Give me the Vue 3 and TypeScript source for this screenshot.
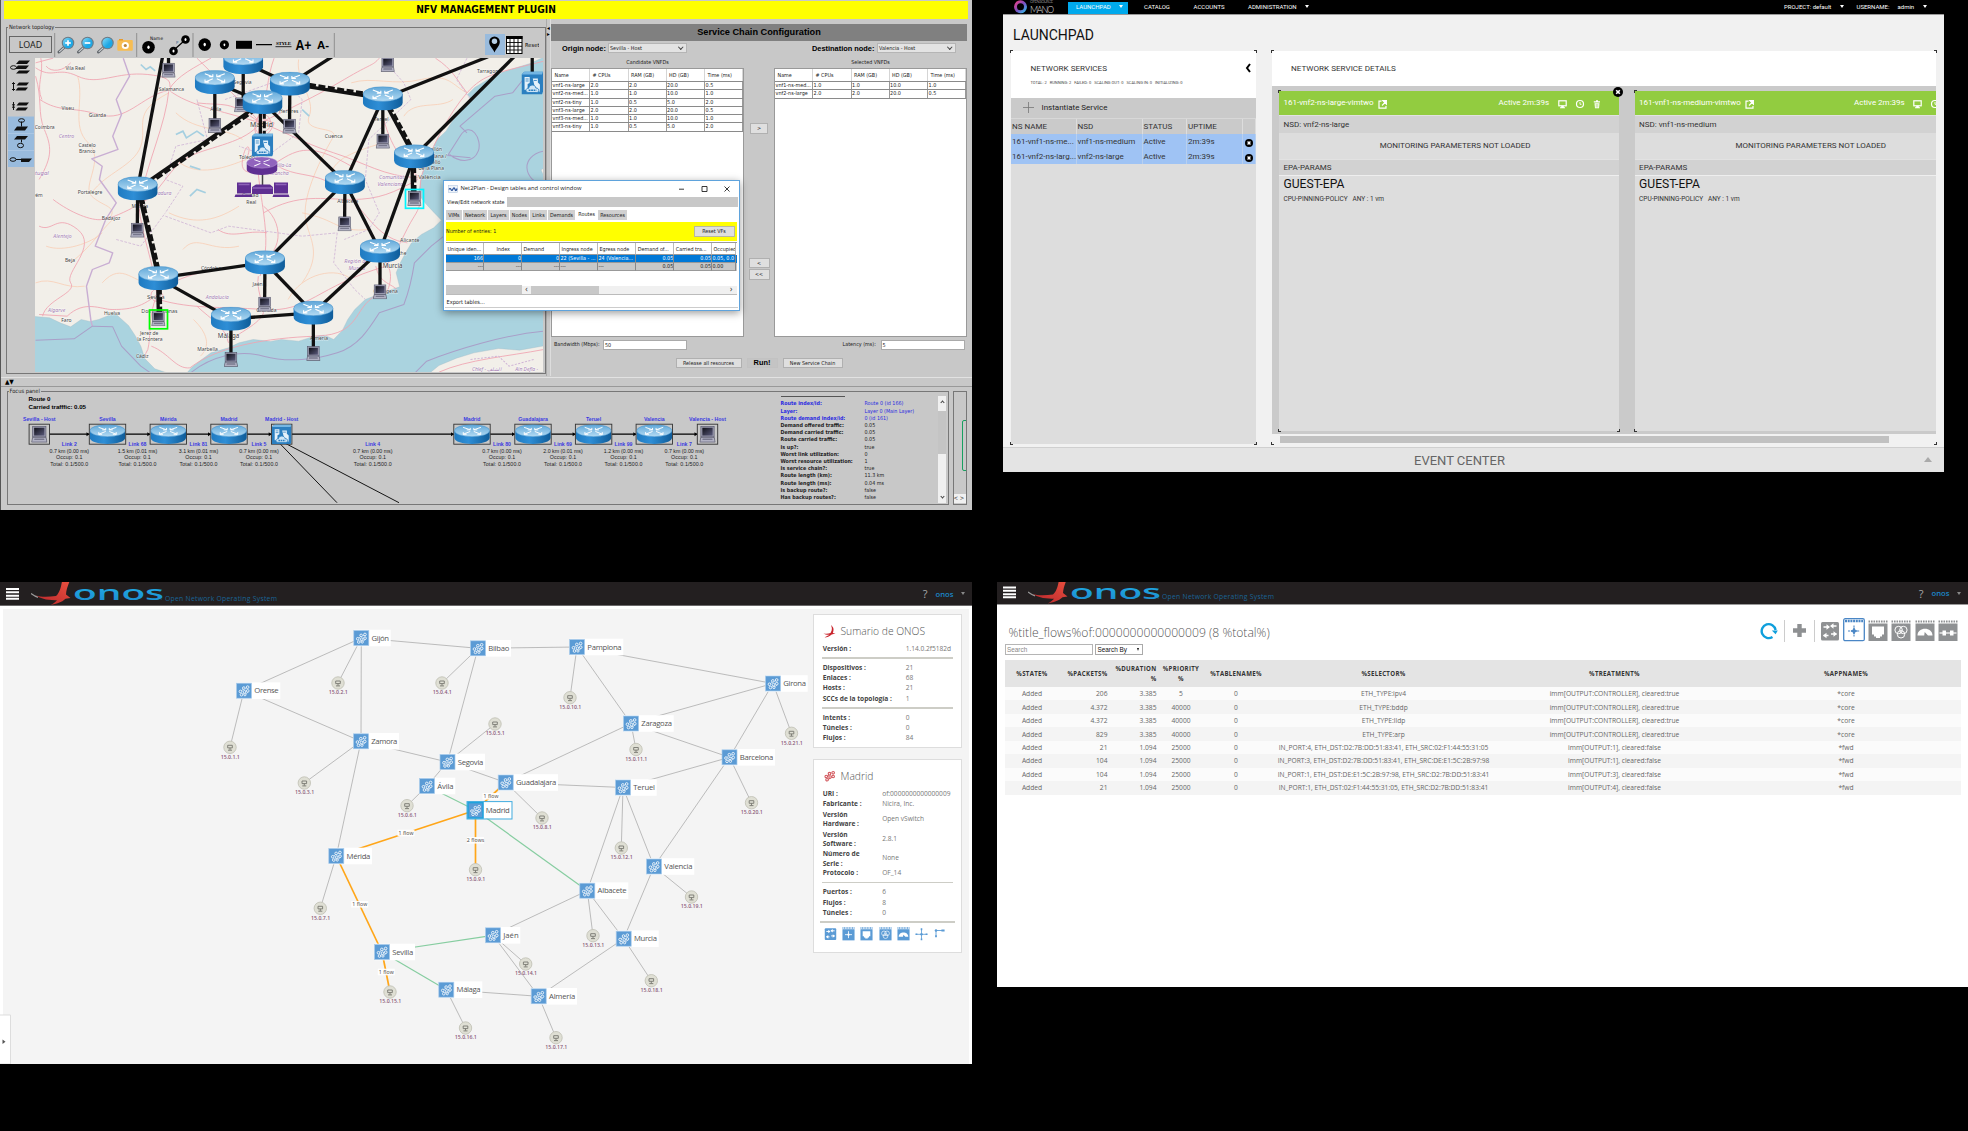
<script setup lang="ts">
type P = [number, number]

/* ---------- NFV window: geographic map ---------- */
const KX = 0.35075
const KY = 1 / 3
const mx = (x: number) => x * KX
const my = (y: number) => y * KY

const routers: P[] = [[692, 188], [611, 248], [825, 253], [747, 308], [1090, 297], [1179, 471], [391, 567], [982, 548], [754, 789], [1082, 754], [450, 836], [657, 958], [892, 940]]
const laptops: P[] = [[479, 212], [611, 378], [686, 316], [824, 380], [1090, 425], [1104, 195], [390, 692], [981, 673], [1180, 597], [450, 958], [753, 914], [1082, 877], [657, 1080], [892, 1062]]
const mapLinks: [number, number, number, number][] = [
  [692, 188, 825, 253], [692, 188, 692, 300], [611, 248, 611, 378], [611, 248, 747, 308], [825, 253, 747, 308],
  [825, 253, 945, 172], [1090, 297, 1390, 172], [1090, 297, 1090, 425], [1090, 297, 982, 548], [1179, 471, 1464, 172],
  [1179, 471, 1082, 754], [391, 567, 462, 172], [747, 308, 982, 548], [825, 253, 824, 380], [391, 567, 390, 692],
  [450, 836, 754, 789], [450, 836, 657, 958], [657, 958, 892, 940], [892, 940, 754, 789], [754, 789, 982, 548],
  [754, 789, 753, 914], [982, 548, 981, 673], [982, 548, 1082, 754], [1082, 754, 892, 940], [1082, 754, 1082, 877],
  [657, 958, 657, 1080], [892, 940, 892, 1062], [1516, 172, 1516, 250], [479, 172, 479, 212],
]
const routeLinks: [number, number, number, number][] = [
  [825, 253, 1090, 297], [1090, 297, 1179, 471], [1173, 471, 1175, 590], [747, 308, 391, 567], [741, 308, 741, 430], [391, 567, 450, 836], [448, 836, 450, 950],
]
const parallel = routeLinks.map(([a, b, c, d], i) => {
  const x1 = mx(a), y1 = my(b), x2 = mx(c), y2 = my(d)
  const l = Math.hypot(x2 - x1, y2 - y1)
  const gap = i === 4 ? 3.9 : 2.5
  const ox = Math.abs(((y2 - y1) / l) * gap), oy = -((x2 - x1) / l) * gap * Math.sign(y2 - y1)
  return { x1: x1 + ox, y1: y1 + oy, x2: x2 + ox, y2: y2 + oy }
})
const places: [string, number, number, number, string][] = [
  ['Vila Real', 213, 212, 5, ''], ['Salamanca', 487, 274, 5, ''], ['Viseu', 192, 331, 5, ''], ['Guarda', 276, 354, 5, ''], ['Coimbra', 126, 390, 5, ''],
  ['Centro', 188, 416, 5.2, 'r'], ['Castelo', 247, 442, 5, ''], ['Branco', 247, 461, 5, ''], ['Portugal', 105, 527, 6, 'r'], ['Portalegre', 255, 584, 5, ''],
  ['Santarém', 88, 593, 5, ''], ['Extremadura', 445, 588, 5.2, 'r'], ['Mérida', 397, 627, 5, ''], ['Badajoz', 315, 661, 5, ''], ['Alentejo', 177, 716, 5.2, 'r'], ['Beja', 198, 789, 5, ''],
  ['Algarve', 160, 938, 5.2, 'r'], ['Faro', 188, 967, 5, ''], ['Huelva', 318, 948, 5, ''], ['Sevilla', 443, 898, 6, ''], ['Dos Hermanas', 453, 942, 5.2, ''],
  ['Jerez de', 424, 1007, 5, ''], ['la Frontera', 426, 1026, 5, ''], ['Cádiz', 404, 1076, 5, ''], ['Marbella', 590, 1056, 5, ''], ['Málaga', 650, 1017, 6.2, ''],
  ['Andalucía', 618, 899, 5.2, 'r'], ['Córdoba', 600, 812, 5, ''], ['Jaén', 733, 859, 5, ''], ['Granada', 758, 937, 5, ''], ['Almería', 908, 1022, 5, ''],
  ['Segovia', 690, 253, 5, ''], ['Ávila', 614, 334, 5, ''], ['Alcalá de Henares', 790, 340, 5, ''], ['Madrid', 744, 383, 6.8, ''], ['Toledo', 703, 480, 5.2, ''],
  ['Castilla-La', 795, 504, 5.2, 'r'], ['Mancha', 795, 527, 5.2, 'r'], ['Ciudad', 712, 594, 5, ''], ['Real', 715, 614, 5, ''], ['Cuenca', 950, 416, 5.2, ''],
  ['Teruel', 1086, 365, 5, ''], ['Tarragona', 1393, 221, 5, ''], ['Castellón', 1228, 456, 5, ''], ['de la Plana /', 1232, 475, 5, ''], ['Castelló', 1228, 494, 5, ''], ['de la Plana', 1228, 513, 5, ''],
  ['València', 1223, 540, 5.8, ''], ['Comunitat', 1115, 539, 5.4, 'r'], ['Valenciana', 1112, 560, 5.4, 'r'], ['Albacete', 990, 612, 5.2, ''], ['Alicante', 1167, 728, 5.2, ''],
  ['Elche', 1140, 768, 5, ''], ['Región de', 1014, 791, 5.4, 'r'], ['Murcia', 1016, 813, 5.4, 'r'], ['Murcia', 1118, 805, 6.2, ''], ['Cartagena', 1098, 882, 5, ''],
  ['Chlef - الشلف', 1386, 1116, 5, 'r'], ['Aïn Defla -', 1500, 1116, 5, 'r'],
]
const roads = [
  'M100 205C150 240 160 200 220 230S330 215 420 225S470 260 490 270',
  'M100 230C120 300 105 340 125 390S150 470 110 540', 'M112 300C170 340 200 320 280 345S400 290 480 272',
  'M480 272C500 230 560 200 600 176', 'M480 272C540 320 620 330 740 370', 'M740 370C760 300 760 230 780 176',
  'M740 370C700 320 650 270 560 176', 'M740 370C820 330 900 290 980 240S1060 200 1080 176', 'M740 370C800 390 860 430 950 460S1090 530 1190 535',
  'M740 370C720 460 740 560 750 640S760 760 740 830', 'M740 370C700 430 600 440 540 470S460 580 395 615', 'M395 615C350 640 320 655 290 660S200 640 150 600',
  'M395 620C400 700 440 800 445 880', 'M445 880C520 820 600 810 700 800S820 680 750 620', 'M445 885C400 930 350 930 318 930S240 900 190 950L110 945',
  'M445 890C420 950 430 1010 420 1050L410 1070', 'M430 1040C480 1060 500 1110 540 1105', 'M450 900C550 930 620 920 750 930S900 860 1100 800',
  'M540 1105C620 1040 760 1015 900 1010S1000 910 1090 880', 'M1100 800C1140 740 1150 700 1180 650S1190 590 1200 530', 'M1200 530C1230 440 1280 340 1330 280S1420 220 1549 185',
  'M1000 600C1050 650 1080 720 1160 730', 'M750 640C850 580 920 600 1000 600S1120 580 1190 540', 'M750 360C760 330 720 350 725 390S770 410 780 370Z', 'M735 350C740 340 760 340 768 360S760 400 740 400S728 370 735 350Z',
  'M650 1030C640 980 600 960 560 920', 'M735 830C730 870 745 900 750 930S700 990 655 1020', 'M480 272C470 380 420 480 395 615', 'M1330 280C1300 240 1290 210 1240 176', 'M110 680C150 700 160 640 220 690S180 820 200 850S130 900 120 950', 'M1090 300C1080 370 1130 480 1190 530', 'M1250 1118C1330 1080 1450 1070 1549 1050',
  'M1070 800C1080 850 1110 850 1130 870M1060 770C1120 780 1120 840 1100 880', 'M100 190L150 176M115 176C125 220 100 260 118 300M130 200C145 220 180 215 200 190', 'M740 370C650 300 640 320 560 310', 'M790 500C840 530 880 520 930 545M620 690C660 720 700 690 760 700',
  'M700 480C720 440 700 420 690 480S740 520 800 480S900 440 1000 500', 'M440 870C420 880 430 910 450 905S470 880 440 870',
]
const minorRoads = [
  'M220 230C240 300 200 380 250 430S230 560 260 590S330 620 315 650', 'M260 580C300 520 380 500 400 440S370 340 480 280', 'M500 480C560 540 650 500 700 480', 'M850 180C840 240 900 300 880 350S960 380 950 410',
  'M950 410C900 500 860 600 870 660S920 760 860 850', 'M480 640C560 680 620 660 680 620', 'M200 790C260 740 280 700 320 660', 'M860 640C960 660 960 700 1050 690', 'M1000 250C1060 230 1120 260 1200 240S1290 260 1330 280', 'M520 750C560 700 600 760 680 740', 'M290 850C350 780 380 860 440 850', 'M820 900C860 820 960 800 1000 840',
  'M500 340C560 400 640 380 690 420', 'M940 560C930 480 1000 460 1090 430', 'M1150 350C1180 300 1250 330 1290 300', 'M550 960C590 1000 600 1040 570 1070', 'M130 740C180 760 260 730 290 700M100 850C150 830 180 870 240 860',
]
const regionLines = ['M560 300L590 420L500 440L470 540L520 560L470 640', 'M640 300L800 240L860 300L850 400L760 470L680 440', 'M1090 180L1150 250L1170 300L1050 420L1040 540L1080 640L1050 690L980 720', 'M470 650L600 700L650 680L860 710L960 700', 'M960 700L950 790L1010 870L1040 900', 'M1330 176L1300 240L1340 300', 'M330 720L400 740L470 640']

interface Row { n: string; c: string; r: string; h: string; t: string }
const mk = (n: string, c: string, r: string, h: string, t: string): Row => ({ n, c, r, h, t })
const candidates: Row[] = [
  mk('vnf1-ns-large', '2.0', '2.0', '20.0', '0.5'), mk('vnf2-ns-med...', '1.0', '1.0', '10.0', '1.0'), mk('vnf2-ns-tiny', '1.0', '0.5', '5.0', '2.0'),
  mk('vnf3-ns-large', '2.0', '2.0', '20.0', '0.5'), mk('vnf3-ns-med...', '1.0', '1.0', '10.0', '1.0'), mk('vnf3-ns-tiny', '1.0', '0.5', '5.0', '2.0'),
]
const selected: Row[] = [mk('vnf1-ns-med...', '1.0', '1.0', '10.0', '1.0'), mk('vnf2-ns-large', '2.0', '2.0', '20.0', '0.5')]

const tabs = ['VIMs', 'Network', 'Layers', 'Nodes', 'Links', 'Demands', 'Routes', 'Resources']

/* ---------- focus panel ---------- */
const focusNodes: { t: string; x: number; k: 'laptop' | 'router' | 'server' }[] = [
  { t: 'Sevilla - Host', x: 39.3, k: 'laptop' }, { t: 'Sevilla', x: 107.5, k: 'router' }, { t: 'Mérida', x: 168.3, k: 'router' }, { t: 'Madrid', x: 229, k: 'router' },
  { t: 'Madrid - Host', x: 281.7, k: 'server' }, { t: 'Madrid', x: 472, k: 'router' }, { t: 'Guadalajara', x: 533, k: 'router' }, { t: 'Teruel', x: 593.6, k: 'router' },
  { t: 'Valencia', x: 654.3, k: 'router' }, { t: 'Valencia - Host', x: 707.5, k: 'laptop' },
]
const half = (k: string) => (k === 'router' ? 18 : 10)
const focusLinks = [
  { t: 'Link 2', d: '0.7 km (0.00 ms)', x: 69.3 }, { t: 'Link 68', d: '1.5 km (0.01 ms)', x: 137.5 }, { t: 'Link 81', d: '3.1 km (0.01 ms)', x: 198.5 }, { t: 'Link 5', d: '0.7 km (0.00 ms)', x: 259 },
  { t: 'Link 4', d: '0.7 km (0.00 ms)', x: 372.7 }, { t: 'Link 80', d: '0.7 km (0.00 ms)', x: 502 }, { t: 'Link 69', d: '2.0 km (0.01 ms)', x: 563 }, { t: 'Link 99', d: '1.2 km (0.00 ms)', x: 623.5 }, { t: 'Link 7', d: '0.7 km (0.00 ms)', x: 684.3 },
]
const routeInfo: [string, string][] = [
  ['Route index/id:', 'Route 0 (id 166)'], ['Layer:', 'Layer 0 (Main Layer)'], ['Route demand index/id:', '0 (id 161)'], ['Demand offered traffic:', '0.05'], ['Demand carried traffic:', '0.05'],
  ['Route carried traffic:', '0.05'], ['Is up?:', 'true'], ['Worst link utilization:', '0'], ['Worst resource utilization:', '1'], ['Is service chain?:', 'true'],
  ['Route length (km):', '11.3 km'], ['Route length (ms):', '0.04 ms'], ['Is backup route?:', 'false'], ['Has backup routes?:', 'false'],
]

/* ---------- launchpad ---------- */
const services = [
  { name: '161-vnf1-ns-me...', nsd: 'vnf1-ns-medium' },
  { name: '161-vnf2-ns-larg...', nsd: 'vnf2-ns-large' },
]
const cards = [
  { name: '161-vnf2-ns-large-vimtwo', nsd: 'vnf2-ns-large' },
  { name: '161-vnf1-ns-medium-vimtwo', nsd: 'vnf1-ns-medium' },
]

/* ---------- ONOS topology ---------- */
interface City { n: string; x: number; y: number; e: number }
const cities: Record<string, City> = {
  gi: { n: 'Gijón', x: 361.3, y: 638, e: 390.7 }, or: { n: 'Orense', x: 244, y: 690.7, e: 280.3 }, za: { n: 'Zamora', x: 361, y: 741.3, e: 399 },
  se: { n: 'Segovia', x: 447.5, y: 762, e: 485 }, av: { n: 'Ávila', x: 427, y: 786, e: 455.3 }, me: { n: 'Mérida', x: 336.3, y: 856, e: 372 },
  sv: { n: 'Sevilla', x: 382, y: 952, e: 415 }, ma: { n: 'Málaga', x: 446.3, y: 989.7, e: 482.3 }, ja: { n: 'Jaén', x: 493, y: 935.3, e: 520.3 },
  bi: { n: 'Bilbao', x: 478, y: 648.3, e: 511 }, pa: { n: 'Pamplona', x: 577, y: 647, e: 623.3 }, gr: { n: 'Girona', x: 773, y: 683.5, e: 807.7 },
  zr: { n: 'Zaragoza', x: 631, y: 723.5, e: 673.7 }, ba: { n: 'Barcelona', x: 729.5, y: 757.3, e: 775 }, gu: { n: 'Guadalajara', x: 505.7, y: 782.5, e: 558 },
  te: { n: 'Teruel', x: 623, y: 787.5, e: 656.7 }, va: { n: 'Valencia', x: 654, y: 866.5, e: 694.3 }, al: { n: 'Albacete', x: 587.3, y: 890.7, e: 628.3 },
  mu: { n: 'Murcia', x: 623.7, y: 938.7, e: 658.7 }, am: { n: 'Almería', x: 538.7, y: 996.3, e: 577 }, mdr: { n: 'Madrid', x: 475.5, y: 810.3, e: 511.5 },
}
const edges: [string, string, string][] = [
  ['gi', 'or', 'g'], ['gi', 'bi', 'g'], ['gi', 'za', 'g'], ['or', 'za', 'g'], ['za', 'se', 'g'], ['za', 'me', 'g'], ['bi', 'se', 'g'], ['bi', 'pa', 'g'], ['pa', 'gr', 'g'], ['pa', 'zr', 'g'],
  ['gr', 'zr', 'g'], ['gr', 'ba', 'g'], ['zr', 'ba', 'g'], ['zr', 'gu', 'g'], ['se', 'gu', 'g'], ['se', 'av', 'g'], ['gu', 'te', 'g'], ['te', 'ba', 'g'], ['te', 'al', 'g'], ['te', 'va', 'g'],
  ['ba', 'va', 'g'], ['va', 'mu', 'g'], ['al', 'mu', 'g'], ['al', 'ja', 'g'], ['ja', 'am', 'g'], ['mu', 'am', 'g'], ['ma', 'am', 'g'],
  ['av', 'mdr', 'n'], ['mdr', 'al', 'n'], ['sv', 'ja', 'n'], ['sv', 'ma', 'n'],
  ['mdr', 'me', 'o'], ['me', 'sv', 'o'], ['mdr', 'gu', 'o'],
]
const hosts: [string, number, number, string][] = [
  ['15.0.2.1', 338, 683, 'gi'], ['15.0.4.1', 442, 683, 'bi'], ['15.0.1.1', 230, 747.3, 'or'], ['15.0.3.1', 304.3, 783, 'za'], ['15.0.5.1', 495, 724, 'se'], ['15.0.6.1', 407, 805.7, 'av'],
  ['15.0.9.1', 475.5, 869.7, 'mdr'], ['15.0.7.1', 320.3, 908.3, 'me'], ['15.0.15.1', 390, 992, 'sv'], ['15.0.16.1', 465.5, 1028, 'ma'], ['15.0.17.1', 556, 1037.7, 'am'], ['15.0.14.1', 525.7, 964, 'ja'],
  ['15.0.13.1', 593, 935.7, 'al'], ['15.0.18.1', 651.3, 980.7, 'mu'], ['15.0.19.1', 691.5, 897, 'va'], ['15.0.12.1', 621.3, 848, 'te'], ['15.0.8.1', 542, 818, 'gu'], ['15.0.20.1', 751.5, 802.7, 'ba'],
  ['15.0.21.1', 791.5, 733.3, 'gr'], ['15.0.11.1', 636, 749.5, 'zr'], ['15.0.10.1', 570, 697.7, 'pa'],
]
const flowTags: [string, number, number][] = [['1 flow', 406, 832.7], ['1 flow', 491, 796], ['2 flows', 475.5, 840], ['1 flow', 359.7, 904], ['1 flow', 386.3, 971.7]]

const flowRows = [
  ['206', '3.385', '5', 'ETH_TYPE:ipv4', 'imm[OUTPUT:CONTROLLER], cleared:true', '*core'],
  ['4.372', '3.385', '40000', 'ETH_TYPE:bddp', 'imm[OUTPUT:CONTROLLER], cleared:true', '*core'],
  ['4.372', '3.385', '40000', 'ETH_TYPE:lldp', 'imm[OUTPUT:CONTROLLER], cleared:true', '*core'],
  ['829', '3.385', '40000', 'ETH_TYPE:arp', 'imm[OUTPUT:CONTROLLER], cleared:true', '*core'],
  ['21', '1.094', '25000', 'IN_PORT:4, ETH_DST:D2:7B:DD:51:83:41, ETH_SRC:02:F1:44:55:31:05', 'imm[OUTPUT:1], cleared:false', '*fwd'],
  ['104', '1.094', '25000', 'IN_PORT:3, ETH_DST:D2:7B:DD:51:83:41, ETH_SRC:DE:E1:5C:2B:97:98', 'imm[OUTPUT:1], cleared:false', '*fwd'],
  ['104', '1.094', '25000', 'IN_PORT:1, ETH_DST:DE:E1:5C:2B:97:98, ETH_SRC:D2:7B:DD:51:83:41', 'imm[OUTPUT:3], cleared:false', '*fwd'],
  ['21', '1.094', '25000', 'IN_PORT:1, ETH_DST:02:F1:44:55:31:05, ETH_SRC:D2:7B:DD:51:83:41', 'imm[OUTPUT:4], cleared:false', '*fwd'],
]
const viewIcons = ['dev', 'flow', 'port', 'group', 'meter', 'pipe']
const detailIcons = ['dev', 'flow', 'port', 'group', 'meter', 'cross', 'corner']
</script>

<template>
  <svg class="defs" width="0" height="0">
    <defs>
      <linearGradient id="gTop" x1="0" y1="0" x2="0" y2="1"><stop offset="0" stop-color="#5ea6d8" /><stop offset="1" stop-color="#b4dbf3" /></linearGradient>
      <linearGradient id="gBody" x1="0" y1="0" x2="1" y2="0"><stop offset="0" stop-color="#1f7ac0" /><stop offset=".4" stop-color="#2e8ed6" /><stop offset="1" stop-color="#0f5c99" /></linearGradient>
      <linearGradient id="gLap" x1="0" y1="0" x2="1" y2="1"><stop offset="0" stop-color="#101018" /><stop offset="1" stop-color="#59597a" /></linearGradient>
      <linearGradient id="gZoom" x1="0" y1="0" x2="1" y2="1"><stop offset="0" stop-color="#8fe0fb" /><stop offset=".6" stop-color="#1ea7e4" /></linearGradient>
      <linearGradient id="gOnos" x1="0" y1="0" x2="0" y2="1"><stop offset="0" stop-color="#22b5ea" /><stop offset="1" stop-color="#1b86cc" /></linearGradient>
      <linearGradient id="gBird" x1="0" y1="1" x2="1" y2="0"><stop offset="0" stop-color="#b8252b" /><stop offset="1" stop-color="#e9503f" /></linearGradient>
      <linearGradient id="gRing" x1="0" y1="0" x2="1" y2="1"><stop offset="0" stop-color="#e8408a" /><stop offset=".5" stop-color="#7a4fc0" /><stop offset="1" stop-color="#35b7ea" /></linearGradient>
    </defs>
    <symbol id="router" viewBox="0 0 40 24" preserveAspectRatio="none">
      <path d="M0 7.5v8.500C0 26.500 40 26.500 40 16V7.500z" fill="url(#gBody)" />
      <ellipse cx="20" cy="7.500" rx="19.800" ry="7.400" fill="url(#gTop)" stroke="#3b8cc9" stroke-width=".5" />
      <path d="M18 6.500L10 3.500M22 6.500L30 3.500M18 8.500L10 12M22 8.500L30 12M14 6.600h4V4.200M26 6.600h-4V4.200M10.200 9.300V12H14M29.800 9.300V12H26" fill="none" stroke="#fff" stroke-width="1.100" />
    </symbol>
    <symbol id="prouter" viewBox="0 0 40 24" preserveAspectRatio="none">
      <path d="M0 7.5v8.500C0 26.500 40 26.500 40 16V7.500z" fill="#5f2f92" />
      <ellipse cx="20" cy="7.500" rx="19.800" ry="7.400" fill="#9163bd" stroke="#c9b0de" stroke-width=".5" />
      <path d="M18 6.500L10 3.500M22 6.500L30 3.500M18 8.500L10 12M22 8.500L30 12" fill="none" stroke="#fff" stroke-width="1.300" />
    </symbol>
    <symbol id="laptop" viewBox="0 0 14 15" preserveAspectRatio="none">
      <rect x="1.200" y=".5" width="11.600" height="9.500" fill="#9c9cb0" stroke="#55556a" stroke-width=".6" />
      <rect x="2.500" y="1.800" width="9" height="6.900" fill="url(#gLap)" />
      <path d="M1.200 10.200h11.600l1 4.300H.2z" fill="#b2b2c4" stroke="#4a4a5c" stroke-width=".6" />
      <path d="M2.800 11.300h8.400l.3 1.400h-9z" fill="#77778c" />
    </symbol>
    <symbol id="server" viewBox="0 0 21 23" preserveAspectRatio="none">
      <path d="M0 3L3 0h18v20l-1 3H0z" fill="#2b7fc0" />
      <path d="M0 3L3 0h18l-1 3z" fill="#74b6e3" />
      <path d="M3 5.500h5v6l-2 1v6H3zM11 7h5v4l2 2v7h-4z" fill="#e4f1fa" />
      <path d="M4 7.500h3M4 9.500h3M12 9h3" stroke="#2b7fc0" stroke-width=".8" />
      <path d="M6.500 21c-3.500-.5-2.500-4.500.5-4.300.7-4.200 6.500-4.200 7-.2 3.500 0 4 4 1 4.500z" fill="#cfe6f6" stroke="#2b7fc0" stroke-width=".9" />
      <path d="M7 18.800h7.500" stroke="#2b7fc0" stroke-width="1.600" stroke-dasharray="1.800 .6" />
    </symbol>
    <symbol id="switch" viewBox="0 0 16 16">
      <path d="M3.800 9.500l5-4.500M5.500 12.500l5.500-5M9 12l3.500-2.500M9.500 6L12 4" stroke="#fff" stroke-width=".7" fill="none" />
      <g fill="#5b9bd5" stroke="#fff" stroke-width=".85"><circle cx="4.200" cy="8.800" r="1.400" /><circle cx="7.800" cy="5.200" r="1.400" /><circle cx="11.900" cy="4.200" r="1.400" /><circle cx="5.300" cy="12.300" r="1.400" /><circle cx="8.500" cy="9.200" r="1.400" /><circle cx="12" cy="8.200" r="1.400" /><circle cx="9" cy="12.300" r="1.200" /></g>
    </symbol>
    <symbol id="bird" viewBox="0 0 40 24">
      <path d="M31 0h7.500c-2 5-3.300 9-3.500 13l4.500 3.500-5 .7c-4 3.800-9 5-15 6.300 3-1.500 5-3 6.500-4.800C16 19 9 17 4.500 13.800 10 16 18 15.500 25 14.500 29 11 30 5 31 0z" fill="url(#gBird)" />
      <path d="M0 12c2 1.500 4 3 7 3.800" stroke="#999" stroke-width="1.200" fill="none" />
    </symbol>
    <symbol id="dev" viewBox="0 0 20 22"><rect x="1" y="2" width="18" height="18.500" rx="1.500" fill="currentColor" /><path d="M3.500 7h5M11 6h5.500M3.500 15.500h5M11 14h5.500" stroke="#fff" stroke-width="1.500" fill="none" /><path d="M6.500 4.200L10 7 6.500 9.800zM13.500 3.200L10 6l3.500 2.800zM6.500 12.700L3 15.500l3.500 2.800zM13.500 11.200l3.500 2.800-3.500 2.800z" fill="#fff" /></symbol>
    <symbol id="flow" viewBox="0 0 20 22"><path d="M.5 1.500h19" stroke="currentColor" stroke-width="2.200" stroke-dasharray="1.600 .9" /><rect x=".5" y="3.500" width="19" height="17.500" fill="currentColor" /><path d="M10 6.500v11M4.500 12h11" stroke="#fff" stroke-width="1.300" /><circle cx="10" cy="12" r="1.800" fill="#fff" /></symbol>
    <symbol id="flowOn" viewBox="0 0 22 24"><rect x=".7" y=".7" width="20.600" height="22" rx="1.500" fill="#fff" stroke="#4a86c5" stroke-width="1.300" /><path d="M2 3h18" stroke="#4a86c5" stroke-width="2.600" stroke-dasharray="2 .7" /><path d="M11 7.500v11M5 13h12" stroke="#4a86c5" stroke-width="1.100" stroke-dasharray="2.200 .8" /><path d="M11 10v6M8 13h6" stroke="#4a86c5" stroke-width="1.500" /><circle cx="11" cy="13" r="1.900" fill="#4a86c5" /></symbol>
    <symbol id="port" viewBox="0 0 20 22"><path d="M.5 1.500h19" stroke="currentColor" stroke-width="2.200" stroke-dasharray="1.600 .9" /><rect x=".5" y="3.500" width="19" height="17.500" fill="currentColor" /><path d="M4 6.500h12v8h-2v2h-2v1.500H8v-1.500H6v-2H4z" fill="#fff" /></symbol>
    <symbol id="group" viewBox="0 0 20 22"><path d="M.5 1.500h19" stroke="currentColor" stroke-width="2.200" stroke-dasharray="1.600 .9" /><rect x=".5" y="3.500" width="19" height="17.500" fill="currentColor" /><g fill="none" stroke="#fff" stroke-width="1"><circle cx="7.600" cy="10" r="3.700" /><circle cx="12.400" cy="10" r="3.700" /><circle cx="10" cy="14.300" r="3.700" /></g></symbol>
    <symbol id="meter" viewBox="0 0 20 22"><path d="M.5 1.500h19" stroke="currentColor" stroke-width="2.200" stroke-dasharray="1.600 .9" /><rect x=".5" y="3.500" width="19" height="17.500" fill="currentColor" /><path d="M2.500 15.500c0-9 15-9 15 0h-4.500l-3.300-3.500-.5 3.500z" fill="#fff" /></symbol>
    <symbol id="pipe" viewBox="0 0 20 22"><path d="M.5 1.500h19" stroke="currentColor" stroke-width="2.200" stroke-dasharray="1.600 .9" /><rect x=".5" y="3.500" width="19" height="17.500" fill="currentColor" /><path d="M1.500 13h17" stroke="#fff" stroke-width="1.200" /><path d="M4.500 10.500h3.500v5H4.500zM12 10.500h3.500v5H12z" fill="#fff" /></symbol>
    <symbol id="cross" viewBox="0 0 20 22"><path d="M10 3v17M1.500 11.500h17" stroke="currentColor" stroke-width="1.300" /><circle cx="10" cy="11.500" r="2" fill="currentColor" /><path d="M10 2v3M10 18v3M.5 11.500h3M16.500 11.500h3" stroke="currentColor" stroke-width="2.500" /></symbol>
    <symbol id="corner" viewBox="0 0 20 22"><path d="M4.500 14V5.500H14" fill="none" stroke="currentColor" stroke-width="1.400" /><circle cx="4.500" cy="5.500" r="2" fill="currentColor" /><path d="M4.500 13v3M13 5.500h5" stroke="currentColor" stroke-width="2.800" /></symbol>
    <symbol id="closeDot" viewBox="0 0 10 10"><circle cx="5" cy="5" r="5" fill="#000" /><path d="M3.200 3.200l3.600 3.600M6.800 3.200L3.200 6.800" stroke="#fff" stroke-width="1.600" /></symbol>
  </svg>

  <main class="desk">
    <!-- NFV management plugin -->
    <section class="win nfv">
      <h1 class="banner">NFV MANAGEMENT PLUGIN</h1>
      <div class="upper">
        <div class="topo">
          <span class="legend">Network topology</span>
          <div class="tools">
            <span class="load">LOAD</span>
            <svg class="toolsvg" width="486" height="26" viewBox="54 33 486 26">
              <path d="M55.700 33v24M137.700 33v24M194 33v24M335.300 33v24" stroke="#8f8f8f" stroke-width="1" />
              <g v-for="(x, i) in [69, 88.5, 108.5]" :key="x">
                <path :d="`M${x - 4} 47.500l-5 4.500`" stroke="#5e6368" stroke-width="3" stroke-linecap="round" />
                <path :d="`M${x - 4.500} 48l-4 3.600`" stroke="#c9ccd0" stroke-width="1.200" stroke-linecap="round" />
                <circle :cx="x" cy="43" r="5.700" fill="url(#gZoom)" stroke="#6d7a85" stroke-width="1.100" />
                <path v-if="i < 2" :d="`M${x - 2.800} 43h5.600`" stroke="#fff" stroke-width="1.700" />
                <path v-if="i === 0" :d="`M${x} 40.200v5.600`" stroke="#fff" stroke-width="1.700" />
              </g>
              <rect x="118.300" y="40" width="15.500" height="10.800" rx="1" fill="#f7bd52" /><path d="M120 39h4v1.500h-4z" fill="#e79a2b" /><circle cx="126.300" cy="45.500" r="3.600" fill="#fff" /><circle cx="126.300" cy="45.500" r="1.600" fill="#b9863a" />
              <g fill="#000"><circle cx="149.500" cy="47.300" r="6.300" /><circle cx="174.500" cy="51" r="4.300" /><circle cx="186.500" cy="39.500" r="4.300" /><circle cx="205.700" cy="44.600" r="6.300" /><circle cx="225.400" cy="44.800" r="4.600" /></g>
              <path d="M176 49l9-8M257 44.700h16" stroke="#000" stroke-width="1.200" />
              <g fill="#fff"><ellipse cx="149.500" cy="47.300" rx="1.200" ry="1.800" /><ellipse cx="174.500" cy="51" rx="1" ry="1.500" /><ellipse cx="186.500" cy="39.500" rx="1" ry="1.500" /><ellipse cx="205.700" cy="44.600" rx="1.200" ry="1.800" /><ellipse cx="225.400" cy="44.800" rx=".9" ry="1.400" /></g>
              <rect x="237" y="40.800" width="16" height="8" fill="#000" />
              <g class="tah"><text x="151" y="39.600" font-size="4.700" textLength="13">Name</text><text x="177" y="43.500" font-size="4.200" fill="#2c5c8a">P</text></g>
              <text x="277" y="45" class="ser" font-size="5" textLength="15">STYLE</text><path d="M276.500 46.700h16" stroke="#000" stroke-width=".8" />
              <text x="296.500" y="50" class="ab" font-size="14.500" textLength="16" lengthAdjust="spacingAndGlyphs">A+</text><text x="318" y="48.700" class="ab" font-size="11.500" textLength="12" lengthAdjust="spacingAndGlyphs">A-</text>
              <rect x="486" y="34" width="20" height="21" fill="#99bbdd" />
              <path d="M495.500 52.500c-1.500-4-5.300-6.500-5.300-10.800a5.300 5.300 0 0 1 10.600 0c0 4.300-3.800 6.800-5.300 10.800z" fill="#000" /><circle cx="495.500" cy="41.300" r="2.700" fill="#b6cfe6" />
              <rect x="507.500" y="36.500" width="15.500" height="17" fill="#fff" stroke="#000" /><path d="M507 37.500h16.500" stroke="#000" stroke-width="3" /><path d="M511 37v16M515 37v16M519 37v16M507 42.500h16M507 46.300h16M507 50h16" stroke="#000" stroke-width=".9" />
              <text x="526" y="46.800" class="tah" font-size="5.500" textLength="14.500">Reset</text>
            </svg>
          </div>
          <div class="maprow">
            <svg width="26.500" height="314" viewBox="8 58.500 26.500 314">
              <rect x="8" y="117" width="26" height="50.500" fill="#99bbdd" /><path d="M8 134h26M8 151h26" stroke="#afc9e4" stroke-width=".8" />
              <g fill="#111">
                <path d="M19 61h11l-3 3.500h-11zM18 66h11l-3 3.500h-11zM19 71h11l-3 3h-11z" />
                <path d="M19 83h10l-2.500 3h-10zM18 88h10l-2.500 3h-10zM19 103h10l-2.500 3h-10zM18 108h10l-2.500 3h-10z" />
                <path d="M17 127h11l-3 4h-11zM17 136.500h11l-3 3.500h-11zM21 159h11l-3 3.500h-8z" />
              </g>
              <g stroke="#111" stroke-width="1" fill="none"><path d="M13.500 83v8M12 84.500l1.500-1.500 1.500 1.500M12 89.500l1.500 1.500 1.500-1.500M13.500 102.500v8M12 105l1.500 1 1.500-1M12 108l1.500-1 1.500 1M21.500 122v5M21.500 140v3M16 160h5" /><ellipse cx="13.500" cy="68" rx="3" ry="1.800" /><ellipse cx="21.500" cy="121" rx="3" ry="1.800" /><ellipse cx="20.500" cy="146" rx="3" ry="2.200" /><ellipse cx="13" cy="160" rx="3" ry="1.800" /></g>
            </svg>
            <svg class="map" width="508.500" height="314.300" viewBox="34.500 58.500 508.500 314.300">
              <rect x="34" y="58" width="510" height="316" fill="#aad3df" />
              <g transform="scale(.35075 .333333)">
                <path fill="#f2efe9" stroke="#9fb8c4" stroke-width="1" d="M90 170H1555L1510 192L1470 205L1420 222L1385 243L1352 264L1332 285L1345 302L1325 322L1300 345L1270 395L1245 420L1230 450L1212 490L1200 530L1192 585L1212 612L1235 638L1257 662L1235 685L1200 705L1172 730L1155 760L1140 790L1128 820L1138 862L1110 872L1070 888L1040 900L1010 930L990 960L975 992L950 1020L925 1007L895 1010L850 1025L800 1020L770 1026L720 1020L680 1030L650 1045L600 1060L570 1083L545 1104L530 1122H480L440 1108L412 1078L400 1040L385 1010L365 978L330 945L310 947L280 960L255 966L230 960L200 982L170 970L140 955L90 950z" />
                <path fill="#f2efe9" stroke="#9fb8c4" d="M1222 1122L1250 1098L1300 1076L1350 1060L1420 1047L1480 1052L1555 1038V1122zM1555 503l-14 8 5 12 9 2z" />
                <path v-for="d in minorRoads" :key="d" :d="d" fill="none" stroke="#f9cdb4" stroke-width="2.300" />
                <path v-for="d in roads" :key="d" :d="d" fill="none" stroke="#f0a3b0" stroke-width="2.500" />
                <path d="M400 195l15 15 12-8 14 12M500 405l20-10 10 20 30-20 20 15M540 590l20-20 25 10M860 330l20 20M380 545l25 12M540 500l30 10" fill="none" stroke="#a5cfe0" stroke-width="5" />
                <path v-for="d in regionLines" :key="d" :d="d" fill="none" stroke="#cfb4d6" stroke-width="2.400" stroke-dasharray="8 4" stroke-linejoin="round" />
                <path d="M350 176L368 230L330 300L345 345L320 410L335 450L260 478L290 500L282 540L330 610L300 660L270 740L320 760L310 790L262 810L245 860L258 965L262 980" fill="none" stroke="#c9aed3" stroke-width="4" stroke-linejoin="round" />
                <path d="M100 1022L210 1018L262 980L320 982L345 1040L400 1100L430 1122M540 1122C600 1070 680 1050 750 1070S900 1080 960 1060S1050 990 1080 940L1150 915S1170 860 1180 790L1228 740L1300 680M1549 235L1490 240L1460 280L1410 290L1310 380L1330 400M1340 475L1275 468L1310 410C1340 360 1375 420 1362 455S1310 490 1280 465M1549 455C1480 470 1490 540 1549 560M1549 995C1440 1005 1300 1050 1215 1085L1180 1122" fill="none" stroke="#a99fc8" stroke-width="3" stroke-linejoin="round" />
                <path d="M1340 1080L1420 1070L1450 1100L1520 1080" fill="none" stroke="#cfb4d6" stroke-width="3" stroke-dasharray="6 4" />
              </g>
              <g class="places"><text v-for="p in places" :key="p[0] + p[1]" :x="mx(p[1])" :y="my(p[2])" :font-size="p[3]" :class="{ reg: p[4] === 'r' }">{{ p[0] }}</text></g>
              <g stroke="#111" stroke-width="3.300">
                <line v-for="(l, i) in mapLinks" :key="'l' + i" :x1="mx(l[0])" :y1="my(l[1])" :x2="mx(l[2])" :y2="my(l[3])" />
                <line v-for="(l, i) in routeLinks" :key="'r' + i" :x1="mx(l[0])" :y1="my(l[1])" :x2="mx(l[2])" :y2="my(l[3])" />
              </g>
              <g stroke="#111" stroke-width="3" stroke-dasharray="7 2.500"><line v-for="(l, i) in parallel" :key="'p' + i" v-bind="l" /></g>
              <path d="M262 172v18" stroke="#444" stroke-width="1.500" />
              <use v-for="(l, i) in laptops" :key="'h' + i" href="#laptop" :x="mx(l[0]) - 7" :y="my(l[1]) - 7.500" width="14" height="15" />
              <rect x="405" y="190" width="18" height="18.800" fill="none" stroke="#00f5ff" stroke-width="1.700" />
              <rect x="149" y="310.500" width="18" height="18.800" fill="none" stroke="#0f0" stroke-width="1.700" />
              <use v-for="(l, i) in routers" :key="'n' + i" href="#router" :x="mx(l[0]) - 20" :y="my(l[1]) - 12" width="40" height="24" />
              <use href="#server" x="251.200" y="134" width="21.500" height="23" /><use href="#server" x="521" y="72" width="21.500" height="23" />
              <use href="#prouter" x="246" y="157.500" width="31" height="18" />
              <g fill="#5f2f92"><path d="M236.500 183h14v11h-14zM273.500 183h14v11h-14zM251.500 187.500l4-2.500h14l3 2.500v7h-21zM235 195h16l1 2.500h-18zM273 195h15l1 2.500h-17z" /></g><path d="M252 188.500h20M238 185h11M275 185h11" stroke="#8d62b8" stroke-width="1.500" />
            </svg>
          </div>
        </div>
        <div class="split"><i>◂</i><i>▸</i></div>
        <div class="chain">
          <h2>Service Chain Configuration</h2>
          <div class="nodes">
            <b>Origin node:</b><span class="sel">Sevilla - Host<i /></span><b class="dest">Destination node:</b><span class="sel">Valencia - Host<i /></span>
          </div>
          <div class="lists">
            <div class="list">
              <p>Candidate VNFDs</p>
              <div class="grid">
                <div class="gr gh"><span>Name</span><span># CPUs</span><span>RAM (GB)</span><span>HD (GB)</span><span>Time (ms)</span></div>
                <div v-for="r in candidates" :key="r.n" class="gr"><span>{{ r.n }}</span><span>{{ r.c }}</span><span>{{ r.r }}</span><span>{{ r.h }}</span><span>{{ r.t }}</span></div>
              </div>
            </div>
            <div class="moves"><span class="btn b1">&gt;</span><span class="btn b2">&lt;</span><span class="btn b3">&lt;&lt;</span></div>
            <div class="list">
              <p>Selected VNFDs</p>
              <div class="grid">
                <div class="gr gh"><span>Name</span><span># CPUs</span><span>RAM (GB)</span><span>HD (GB)</span><span>Time (ms)</span></div>
                <div v-for="r in selected" :key="r.n" class="gr"><span>{{ r.n }}</span><span>{{ r.c }}</span><span>{{ r.r }}</span><span>{{ r.h }}</span><span>{{ r.t }}</span></div>
              </div>
            </div>
          </div>
          <div class="fields"><span>Bandwidth (Mbps):</span><span class="inp">50</span><span class="lat">Latency (ms):</span><span class="inp">5</span></div>
          <div class="actions"><span class="btn rel">Release all resources</span><span class="btn run">Run!</span><span class="btn new">New Service Chain</span></div>
        </div>
      </div>
      <div class="hsplit"><span>▲▼</span></div>
      <div class="lower">
        <div class="focus">
          <span class="legend">Focus panel</span>
          <svg class="fsvg" width="770" height="112" viewBox="8 392.300 770 112">
            <g class="ab" font-size="6.200"><text x="28.500" y="401.800" textLength="22">Route 0</text><text x="28.500" y="409.600" textLength="57.500">Carried trafffic: 0.05</text></g>
            <path d="M49 434.500H697" stroke="#000" stroke-width="1.300" />
            <path d="M280 444L337 503M286 444L399 503" stroke="#000" stroke-width=".9" />
            <g v-for="(n, i) in focusNodes" :key="n.x">
              <path v-if="i" :d="`M${n.x - half(n.k)} 434.500l-3-2v4z`" />
              <rect :x="n.x - half(n.k) - .2" y="424.500" :width="half(n.k) * 2 + .4" height="20" fill="#c8c8c8" stroke="#333" stroke-width=".9" />
              <use :href="'#' + n.k" :x="n.x - (n.k === 'router' ? 17.800 : n.k === 'server' ? 9.800 : 8)" :y="n.k === 'laptop' ? 426 : 424.800" :width="n.k === 'router' ? 35.600 : n.k === 'server' ? 19.600 : 16" :height="n.k === 'laptop' ? 17 : 19.600" />
              <text class="flab" :x="n.x" y="421.300">{{ n.t }}</text>
            </g>
            <g v-for="l in focusLinks" :key="l.x">
              <text class="flab" :x="l.x" y="446.200">{{ l.t }}</text>
              <text class="finf" :x="l.x" y="453" textLength="39.500">{{ l.d }}</text>
              <text class="finf" :x="l.x" y="459.700" textLength="26.500">Occup: 0.1</text>
              <text class="finf" :x="l.x" y="466.300" textLength="38">Total: 0.1/500.0</text>
            </g>
          </svg>
          <div class="info">
            <i class="dash" />
            <div v-for="(r, i) in routeInfo" :key="r[0]" :class="{ blue: i < 3 }"><b>{{ r[0] }}</b><span>{{ r[1] }}</span></div>
          </div>
          <div class="vbar"><i class="up" /><i class="thumb" /><i class="dn" /></div>
        </div>
        <div class="side"><i class="grn" /><span>&lt; &gt;</span></div>
      </div>

      <!-- floating Net2Plan dialog -->
      <div class="dlg">
        <div class="dt"><svg width="10" height="8" viewBox="0 0 10 8"><rect x=".3" y=".3" width="9.400" height="7.400" fill="#eef3fa" stroke="#a9bfdc" stroke-width=".5" /><path d="M1 4.500q1-2 2 0t2-.5 2 .3 2-.8" stroke="#27519b" fill="none" stroke-width="1.200" /></svg><span>Net2Plan - Design tables and control window</span>
          <svg class="wc" width="56" height="8" viewBox="0 0 56 8"><path d="M1 4.200h5M24 1.500h5v5h-5zM46.500 1.500l5 5M51.500 1.500l-5 5" stroke="#222" stroke-width=".9" fill="none" /></svg></div>
        <div class="dmenu"><span>View/Edit network state</span></div>
        <div class="dtabs"><span v-for="t in tabs" :key="t" :class="{ on: t === 'Routes' }">{{ t }}</span></div>
        <div class="yel"><span>Number of entries: 1</span><span class="btn">Reset VFs</span></div>
        <div class="dg dh"><span>Unique iden...</span><span class="c">Index</span><span>Demand</span><span>Ingress node</span><span>Egress node</span><span>Demand of...</span><span>Carried tra...</span><span>Occupied</span></div>
        <div class="dg db"><span>166</span><span>0</span><span>0</span><span class="l">22 (Sevilla - ...</span><span class="l">24 (Valencia...</span><span>0.05</span><span>0.05</span><span class="l">0.05, 0.0</span></div>
        <div class="dg dx"><span>---</span><span>---</span><span>---</span><span class="l">---</span><span class="l">---</span><span>0.05</span><span>0.05</span><span class="l">0.00</span></div>
        <div class="dscroll"><i /><span>‹</span><b /><span class="r">›</span></div>
        <div class="dexp">Export tables...</div>
      </div>
    </section>

    <!-- MANO launchpad -->
    <section class="win mano">
      <nav>
        <svg width="65" height="14" viewBox="1003 0 65 14"><circle cx="1020.500" cy="6.800" r="5" fill="none" stroke="url(#gRing)" stroke-width="3" /><text x="1030" y="13.300" class="lg" font-size="9" textLength="24">MANO</text><text x="1030" y="3.200" class="lg" font-size="4" textLength="23">OPEN SOURCE</text></svg>
        <span class="on">LAUNCHPAD<i class="tri" /></span><span class="n1">CATALOG</span><span class="n2">ACCOUNTS</span><span class="n3">ADMINISTRATION<i class="tri" /></span>
        <span class="n4">PROJECT: default<i class="tri" /></span><span class="n5">USERNAME:</span><span class="n6">admin<i class="tri" /></span>
      </nav>
      <h2>LAUNCHPAD</h2>
      <div class="cols">
        <div class="ns">
          <div class="hd"><h3>NETWORK SERVICES</h3><p>TOTAL: 2&nbsp;&nbsp; RUNNING: 2&nbsp;&nbsp; FAILED: 0&nbsp;&nbsp; SCALING OUT: 0&nbsp;&nbsp; SCALING IN: 0&nbsp;&nbsp; INITIALIZING: 0</p><svg width="6" height="10" viewBox="0 0 6 10"><path d="M5 1L2 5l3 4" fill="none" stroke="#000" stroke-width="2" /></svg></div>
          <div class="inst"><svg width="11" height="11" viewBox="0 0 11 11"><path d="M5.500 0v11M0 5.500h11" stroke="#777" stroke-width=".8" /></svg>Instantiate Service</div>
          <div class="tr th"><span>NS NAME</span><span>NSD</span><span>STATUS</span><span>UPTIME</span><span /></div>
          <div v-for="s in services" :key="s.name" class="tr td"><span>{{ s.name }}</span><span>{{ s.nsd }}</span><span>Active</span><span>2m:39s</span><span><svg width="8" height="8"><use href="#closeDot" width="8" height="8" /></svg></span></div>
          <i class="k tl" /><i class="k trr" /><i class="k bl" /><i class="k br" />
        </div>
        <div class="det">
          <div class="hd"><h3>NETWORK SERVICE DETAILS</h3></div>
          <div class="cards">
            <div v-for="(c, i) in cards" :key="c.name" class="card">
              <div class="green"><span>{{ c.name }}</span>
                <svg width="9" height="9" viewBox="0 0 9 9"><path d="M3.500 1.200H1v7h7V6" fill="none" stroke="#fff" stroke-width="1.200" /><path d="M4.700.5h4v4zM4 5.500L7.500 2" fill="#fff" stroke="#fff" stroke-width="1.100" /></svg>
                <span class="act">Active 2m:39s</span>
                <svg class="ic" width="42" height="10" viewBox="0 0 42 10"><rect x=".8" y="1.800" width="7.400" height="5" fill="none" stroke="#fff" stroke-width="1.200" /><path d="M3.200 6.800h2.600v1.400h1.200v1H2v-1h1.200z" fill="#fff" /><circle cx="22" cy="5" r="3.500" fill="none" stroke="#fff" stroke-width="1.200" /><path d="M22 3v2.300h1.500" fill="none" stroke="#fff" stroke-width=".9" /><path d="M36.500 4.200h5l-.5 5h-4zM35.800 2.200h6.400v1.300h-6.400zM38 1.200h2v1h-2z" fill="#fff" /><path d="M38.200 5v3.500M39.800 5v3.500" stroke="#92cc40" stroke-width=".6" /></svg>
              </div>
              <div class="r1">NSD: {{ c.nsd }}</div>
              <div class="r2">MONITORING PARAMETERS NOT LOADED</div>
              <div class="r1 r3">EPA-PARAMS</div>
              <div class="ge">GUEST-EPA</div>
              <div class="cpu">CPU-PINNING-POLICY&nbsp;&nbsp; ANY : 1 vm</div>
              <svg v-if="!i" class="cx" width="10" height="10"><use href="#closeDot" width="10" height="10" /></svg>
              <i class="k tl" /><i class="k bl" /><i v-if="!i" class="k br" />
            </div>
          </div>
          <div class="hs"><b /></div>
          <i class="k tl" /><i class="k trr" /><i class="k bl" /><i class="k br" />
        </div>
      </div>
      <footer>EVENT CENTER<i /></footer>
    </section>

    <!-- ONOS topology -->
    <section class="win onos">
      <header>
        <svg width="280" height="23" viewBox="0 582 280 23"><path d="M6 589h13M6 592.300h13M6 595.700h13M6 598.700h13" stroke="#fff" stroke-width="1.900" /><use href="#bird" x="31" y="581.500" width="40" height="24" /><text x="73" y="600.200" class="ol" textLength="91" lengthAdjust="spacingAndGlyphs">onos</text><text x="160.500" y="600.200" font-size="6" fill="#1b86cc">.</text><text x="165" y="600.500" class="os" textLength="112">Open Network Operating System</text></svg>
        <div class="usr"><span>?</span><b>onos</b><i /></div>
      </header>
      <div class="stage">
        <svg width="972" height="459" viewBox="0 605 972 459">
          <rect x="0" y="605" width="972" height="459" fill="#fff" /><rect x="3" y="609" width="966" height="455" fill="#f4f4f4" /><path d="M0 605.500h972" stroke="#6a6869" />
          <g>
            <line v-for="(h, i) in hosts" :key="'hl' + i" :x1="h[1]" :y1="h[2]" :x2="cities[h[3]].x" :y2="cities[h[3]].y" :class="h[3] === 'mdr' || h[3] === 'sv' ? 'eo' : 'eh'" />
            <line v-for="(e, i) in edges" :key="'e' + i" :x1="cities[e[0]].x" :y1="cities[e[0]].y" :x2="cities[e[1]].x" :y2="cities[e[1]].y" :class="'e' + e[2]" />
          </g>
          <g v-for="h in hosts" :key="h[0]">
            <circle :cx="h[1]" :cy="h[2]" r="6.200" fill="#dfdfd4" stroke="#c3c3b8" stroke-width=".9" />
            <path :d="`M${h[1] - 2.300} ${h[2] - 2}h4.600v2.600h-4.600zM${h[1]} ${h[2] + .6}v2M${h[1] - 2} ${h[2] + 2.900}h4`" fill="none" stroke="#77776f" stroke-width=".9" />
            <text class="hip" :x="h[1] + .3" :y="h[2] + 11.200" :textLength="h[0].length === 8 ? 19 : 22">{{ h[0] }}</text>
          </g>
          <g v-for="f in flowTags" :key="f[1]"><rect :x="f[1] - 8.500" :y="f[2] - 3" width="17" height="6.600" fill="#fff" opacity=".9" /><text class="ft" :x="f[1]" :y="f[2] + 2.100" :textLength="f[0].length > 6 ? 17.500 : 15">{{ f[0] }}</text></g>
          <g v-for="(c, k) in cities" :key="k">
            <rect :x="c.x - 7.500" :y="c.y - 8.300" :width="c.e - c.x + 7.500" height="16.600" fill="#fff" />
            <rect :x="c.x - 7.500" :y="c.y - 7.500" width="15" height="15" fill="#5b9bd5" stroke="#a9cbea" stroke-width=".7" />
            <g v-if="k === 'mdr'"><rect :x="c.x - 8.500" :y="c.y - 8.700" width="45" height="17.400" fill="none" stroke="#42ade0" stroke-width="1" /><rect :x="c.x - 7.500" :y="c.y - 7.700" width="15" height="15.400" fill="#5b9bd5" stroke="#1fa3dd" stroke-width="1.500" /></g>
            <use href="#switch" :x="c.x - 7.500" :y="c.y - 7.500" width="15" height="15" />
            <text class="ct" :x="c.x + 10.300" :y="c.y + 2.500" :textLength="c.e - c.x - 12">{{ c.n }}</text>
          </g>
          <path d="M0 1015h10.500V1064H0" fill="#fff" stroke="#ddd" /><path d="M2.500 1039.500l3 2.200-3 2.200z" fill="#555" />
        </svg>
        <aside>
          <div class="pn p1">
            <h4><svg width="13" height="13" viewBox="0 0 13 13"><path d="M8 0c3 2.500 3 5 1.800 8l2.700.6-3.800.8C6.500 11.500 4 12 1.500 12.500 4 11 5.500 10.500 6.500 9.800 4 10 2 9.500.5 8.500c3 .5 5 .3 7-.5C9.500 5 9 2.500 8 0z" fill="#c9252d" /></svg>Sumario de ONOS</h4>
            <dl><dt>Versión :</dt><dd>1.14.0.2f5182d</dd></dl><hr>
            <dl><dt>Dispositivos :</dt><dd>21</dd><dt>Enlaces :</dt><dd>68</dd><dt>Hosts :</dt><dd>21</dd><dt>SCCs de la topología :</dt><dd>1</dd></dl><hr>
            <dl><dt>Intents :</dt><dd>0</dd><dt>Túneles :</dt><dd>0</dd><dt>Flujos :</dt><dd>84</dd></dl>
          </div>
          <div class="pn p2">
            <h4><svg width="13" height="13" viewBox="0 0 16 16"><g fill="#fff" stroke="#d2555b" stroke-width="1.300"><path d="M4 9l5-5M6 12l6-5" /><circle cx="4" cy="8" r="1.600" /><circle cx="8" cy="4.500" r="1.600" /><circle cx="12.500" cy="3.500" r="1.600" /><circle cx="5" cy="12" r="1.600" /><circle cx="8.700" cy="8.700" r="1.600" /><circle cx="12.500" cy="8" r="1.600" /></g></svg>Madrid</h4>
            <dl><dt>URI :</dt><dd>of:0000000000000009</dd><dt>Fabricante :</dt><dd>Nicira, Inc.</dd><dt class="two">Versión<br>Hardware :</dt><dd>Open vSwitch</dd><dt class="two">Versión<br>Software :</dt><dd>2.8.1</dd><dt class="two">Número de<br>Serie :</dt><dd>None</dd><dt>Protocolo :</dt><dd>OF_14</dd></dl><hr>
            <dl><dt>Puertos :</dt><dd>6</dd><dt>Flujos :</dt><dd>8</dd><dt>Túneles :</dt><dd>0</dd></dl><hr class="wide">
            <div class="di"><svg v-for="n in detailIcons" :key="n" width="13" height="14"><use :href="'#' + n" width="13" height="14" /></svg></div>
          </div>
        </aside>
      </div>
    </section>

    <!-- ONOS flow table -->
    <section class="win flows">
      <header>
        <svg width="280" height="22" viewBox="0 583.500 280 22"><path d="M6 589h13M6 592.300h13M6 595.700h13M6 598.700h13" stroke="#fff" stroke-width="1.900" /><use href="#bird" x="31" y="581.500" width="40" height="24" /><text x="73" y="600.200" class="ol" textLength="91" lengthAdjust="spacingAndGlyphs">onos</text><text x="160.500" y="600.200" font-size="6" fill="#1b86cc">.</text><text x="165" y="600.500" class="os" textLength="112">Open Network Operating System</text></svg>
        <div class="usr"><span>?</span><b>onos</b><i /></div>
      </header>
      <div class="bar">
        <div>
          <h2>%title_flows%of:0000000000000009 (8 %total%)</h2>
          <div class="srch"><span class="si">Search</span><span class="sb">Search By<i /></span></div>
        </div>
        <div class="vi">
          <svg width="18" height="18" viewBox="0 0 18 18"><path d="M12.500 15A7 7 0 1 1 15.600 8" fill="none" stroke="#0f9fdc" stroke-width="2.400" /><path d="M11.800 8.500h6l-2.200 3.800z" fill="#0f9fdc" /></svg><i class="sp" />
          <svg width="13" height="13" viewBox="0 0 13 13"><path d="M6.500 0v13M0 6.500h13" stroke="#8e9092" stroke-width="4.400" /></svg><i class="sp s2" />
          <template v-for="n in viewIcons" :key="n"><svg v-if="n === 'flow'" width="22" height="24" class="fo"><use href="#flowOn" width="22" height="24" /></svg><svg v-else width="20" height="22"><use :href="'#' + n" width="20" height="22" /></svg></template>
        </div>
      </div>
      <table>
        <colgroup><col class="c1"><col class="c2"><col class="c3"><col class="c4"><col class="c5"><col class="c6"><col class="c7"><col class="c8"></colgroup>
        <thead><tr><th>%STATE%</th><th class="r">%PACKETS%</th><th class="r">%DURATION<br>%</th><th>%PRIORITY<br>%</th><th>%TABLENAME%</th><th>%SELECTOR%</th><th>%TREATMENT%</th><th>%APPNAME%</th></tr></thead>
        <tbody><tr v-for="(r, i) in flowRows" :key="i"><td>Added</td><td class="r">{{ r[0] }}</td><td class="r">{{ r[1] }}</td><td>{{ r[2] }}</td><td>0</td><td>{{ r[3] }}</td><td>{{ r[4] }}</td><td>{{ r[5] }}</td></tr></tbody>
      </table>
    </section>
  </main>
</template>

<style>
html, body { background: #000; }
</style>

<style scoped>
* { box-sizing: border-box; }
h1, h2, h3, h4, p, dl, dd, dt { margin: 0; font-weight: 400; }
.defs { position: absolute; }
svg { display: block; flex: none; }
.desk { display: grid; grid-template-columns: 997px 971px; grid-template-rows: 582px 549px; width: 1968px; height: 1131px; background: #000; overflow: hidden; }
.win { position: relative; overflow: hidden; white-space: nowrap; }
i { font-style: normal; }

/* NFV */
.nfv { width: 972px; height: 510px; background: #c8c8c8; border-left: 1px solid #555; font: 5.4px/1 "DejaVu Sans Condensed", "Noto Sans", sans-serif; color: #222; }
.banner { height: 18px; margin: 1px 4px 0 3px; background: #ff0; font-weight: 700; font-size: 10.2px; line-height: 18px; text-align: center; color: #000; }
.upper { display: flex; height: 358px; }
.topo { width: 540px; height: 346.500px; margin: 8px 0 0 5px; border: 1px solid #777; position: relative; }
.legend { position: absolute; left: 1px; top: -4px; background: #c8c8c8; padding: 0 1px; font-size: 5.7px; line-height: 7px; }
.tools { display: flex; height: 30px; align-items: flex-start; padding-left: 2px; }
.load { width: 43px; height: 17px; margin-top: 8px; border: 1px solid #666; font: 8.900px/15px "Noto Sans", sans-serif; text-align: center; }
.toolsvg { margin-top: 5px; margin-left: 1px; }
.maprow { display: flex; padding-left: 1px; }
.tah { font-family: "DejaVu Sans Condensed", "Noto Sans", sans-serif; }
.ser { font-family: "Liberation Serif", serif; font-weight: 700; }
.ab { font-family: "Liberation Sans", sans-serif; font-weight: 700; }
.places text { font-family: "Noto Sans", sans-serif; text-anchor: middle; fill: #444; paint-order: stroke; stroke: #fff; stroke-opacity: .6; stroke-width: .8px; }
.places .reg { fill: #a57fb5; font-style: italic; }
.split { width: 5px; height: 357px; border-left: 1px solid #aaa; border-right: 1px solid #ddd; font-size: 6px; line-height: 6px; padding-top: 6px; display: flex; flex-direction: column; color: #000; }
.chain { width: 416px; padding-top: 4.500px; }
.chain h2 { height: 17px; background: #808080; font: 700 9.200px/17px "Liberation Sans", sans-serif; text-align: center; color: #000; }
.nodes { display: flex; align-items: center; height: 15px; padding-left: 11px; }
.nodes b { font: 700 7.400px/15px "Liberation Sans", sans-serif; width: 46px; color: #000; }
.nodes .dest { width: 65px; margin-left: 125px; }
.sel { width: 79px; height: 10px; background: #e3e3e3; border: 1px solid #b5b5b5; line-height: 8px; padding-left: 1px; position: relative; }
.sel i { position: absolute; right: 4px; top: 1px; width: 3.500px; height: 3.500px; border: solid #444; border-width: 0 .8px .8px 0; transform: rotate(45deg); }
.lists { display: flex; height: 281px; }
.list { width: 193px; }
.list p { height: 12.500px; line-height: 12.500px; text-align: center; }
.grid { height: 268.500px; background: #fff; border: 1px solid #999; }
.gr { display: grid; grid-template-columns: 38px 38.500px 38px 38.500px 38px; height: 8.270px; border-bottom: 1px solid #8a8a8a; line-height: 7.500px; }
.gr span { border-right: 1px solid #999; padding-left: .6px; overflow: hidden; }
.gh { height: 13px; line-height: 12.500px; }
.gh span { padding-left: 2.500px; border-right-color: #d5d5d5; }
.btn { display: block; background: #dfdfdf; border: 1px solid #b0b0b0; text-align: center; line-height: 8px; height: 10.500px; }
.moves { width: 31px; padding-top: 67.500px; }
.b1 { margin: 0 6px; } .b2 { margin: 124px 4.500px 0; } .b3 { margin: 1px 4.500px 0; }
.fields { display: flex; height: 17px; align-items: center; padding-left: 3px; }
.fields span:first-child { width: 49px; }
.inp { width: 84px; height: 10px; background: #fff; border: 1px solid #aaa; line-height: 8px; padding-left: 1px; }
.lat { width: 38px; margin-left: 155.500px; }
.actions { display: flex; padding: 4px 0 0 124.500px; }
.rel { width: 66px; } .run { width: 31px; margin: 0 5px; font: 700 7.400px/8px "Liberation Sans", sans-serif; border-color: #c2c2c2; background: #c4c4c4; color: #000; } .new { width: 60px; }
.hsplit { height: 10px; border-top: 1px solid #e2e2e2; border-bottom: 1px solid #999; padding-left: 4px; font-size: 6.500px; line-height: 8px; color: #000; }
.hsplit span { letter-spacing: -.2px; }
.lower { display: flex; padding: 4px 0 0 5.500px; }
.focus { position: relative; width: 942px; height: 113.500px; border: 1px solid #777; display: flex; }
.flab { font: 700 5.200px "Liberation Sans", sans-serif; fill: #3a3ae0; text-anchor: middle; }
.finf { font: 5.300px "Liberation Sans", sans-serif; fill: #222; text-anchor: middle; }
.info { width: 152px; padding-top: 8.300px; margin-left: 3px; }
.info .dash { position: absolute; top: 4px; width: 64px; border-top: 1px solid #555; }
.info div { display: flex; height: 7.230px; line-height: 7.230px; font-size: 5.350px; }
.info b { width: 84px; font-weight: 700; }
.info .blue { color: #2a2ae0; }
.vbar { width: 8px; height: 107px; margin: 3.500px 0 0 5.500px; background: #f0f0f0; display: flex; flex-direction: column; align-items: center; position: relative; }
.thumb { width: 8px; height: 43px; margin-top: 7px; background: #c4c4c4; }
.up, .dn { width: 3px; height: 3px; border: solid #444; border-width: .9px 0 0 .9px; transform: rotate(45deg); margin-top: 5px; }
.dn { transform: rotate(225deg); margin-top: 41px; }
.side { position: relative; width: 14px; height: 113.500px; margin-left: 4px; border: 1px solid #777; overflow: hidden; }
.grn { position: absolute; left: 8px; top: 28px; width: 8px; height: 51px; border: 1.500px solid #18a060; border-radius: 2px; }
.side span { position: absolute; bottom: 1px; left: 0; width: 12px; height: 9px; background: #f0f0f0; line-height: 8px; font-size: 6px; }

.dlg { position: absolute; left: 442px; top: 180px; width: 297px; height: 130.500px; background: #fff; border: 1px solid #5fa3dc; box-shadow: 0 2px 8px rgba(0, 0, 0, .4); }
.dt { display: flex; align-items: center; height: 15.500px; padding-left: 4px; font: 5.800px/15px "Open Sans", sans-serif; color: #222; }
.dt span { margin-left: 2.500px; }
.wc { margin: 0 5px 0 auto; }
.dmenu { height: 10.500px; background: #c8c8c8; margin: 0 1px; line-height: 10px; }
.dmenu span { display: inline-block; background: #fff; height: 10.500px; width: 62px; padding-left: 2px; }
.dtabs { display: flex; align-items: flex-end; height: 15px; padding: 0 2px 2px; }
.dtabs span { background: #d0d0d0; border-right: 1px solid #fff; height: 10px; line-height: 10px; padding: 0 2.150px; }
.dtabs .on { background: #fff; height: 11px; }
.yel { display: flex; align-items: center; justify-content: space-between; height: 19px; margin: 0 2px; padding-right: 2.500px; background: #ff0; }
.yel .btn { width: 41px; height: 11.500px; border: 1.500px solid #b8b8a0; }
.dg { display: grid; grid-template-columns: 38px 38px 38px 38px 38.300px 38px 37.700px 24.500px; margin: 0 2px; height: 8px; line-height: 7.500px; overflow: hidden; }
.dg span { border-right: 1px solid #888; border-bottom: 1px solid #999; text-align: right; overflow: hidden; }
.dg .l { text-align: left; padding-left: .5px; }
.dh { height: 13px; line-height: 12px; margin-top: .5px; border-top: 1px solid #999; }
.dg.dh span { text-align: left; padding-left: 1.500px; border-right-color: #bbb; }
.dg.dh .c { text-align: center; }
.db { background: #0078d7; color: #fff; } .dx { background: #c8c8c8; }
.dscroll { display: flex; align-items: center; height: 9px; margin: 15px 2px 0; background: #f0f0f0; border-bottom: 1px solid #bbb; }
.dscroll i { width: 76px; height: 8.500px; background: #c8c8c8; }
.dscroll span { width: 9px; text-align: center; font-size: 8px; }
.dscroll b { width: 68px; height: 8px; background: #c8c8c8; }
.dscroll .r { margin-left: auto; }
.dexp { margin: 0 1px; height: 13px; line-height: 14px; padding-left: 1.500px; border-bottom: 1px solid #ccc; font-size: 5.600px; }

/* MANO */
.mano { width: 941px; height: 472px; margin-left: 6px; background: #f1f1f1; font: 8px/1 Roboto, sans-serif; color: #333; }
.mano nav { display: flex; height: 15px; background: #000; border-bottom: 1px solid #999; color: #fff; font-size: 6px; line-height: 14px; }
.lg { font-family: Lato, sans-serif; font-weight: 300; fill: #ddd; }
.mano .on { background: #00a9ec; width: 60px; margin-top: 2px; padding-left: 8px; line-height: 10.500px; }
.tri { display: inline-block; border: 2.500px solid transparent; border-top: 3px solid #fff; border-bottom: 0; margin-left: 8.500px; vertical-align: 1px; }
.n1 { margin-left: 16px; width: 49.500px; } .n2 { width: 54.500px; } .n3 { width: 536px; } .n4 { width: 72.500px; } .n5 { width: 41px; }
.mano h2 { height: 36px; padding-left: 10px; font-size: 14px; line-height: 40px; color: #111; }
.cols { display: flex; height: 392.500px; padding-left: 8px; gap: 15.500px; }
.ns { position: relative; width: 245px; background: #ddd; }
.hd { position: relative; background: #fff; height: 46.500px; padding: 11.500px 0 0 19.500px; }
.hd h3 { font-size: 8.100px; line-height: 11px; }
.hd p { font-size: 4px; line-height: 6px; margin-top: 6px; color: #444; }
.hd svg { position: absolute; right: 5px; top: 12px; }
.inst { display: flex; align-items: center; height: 20px; padding-left: 12px; gap: 7.500px; background: #cacaca; color: #222; }
.tr { display: grid; grid-template-columns: 65.500px 66px 44.500px 56px 13px; height: 15px; line-height: 15px; }
.tr span { padding-left: 1px; border-right: 1px solid #ddd; }
.th { height: 16px; background: #cacaca; border-top: 1px solid #d8d8d8; }
.td { background: #9fc3f4; }
.td span { border-color: #b9d0ee; }
.td svg { margin: 5px 0 0 1px; }
.k { position: absolute; width: 3px; height: 3px; border: solid #333; border-width: 0; }
.tl { left: -1px; top: -1px; border-width: 1px 0 0 1px; } .trr { right: -1px; top: -1px; border-width: 1px 1px 0 0; } .bl { left: -1px; bottom: -1px; border-width: 0 0 1px 1px; } .br { right: -1px; bottom: -1px; border-width: 0 1px 1px 0; }
.det { position: relative; width: 664.500px; background: #cacaca; }
.det .hd { height: 34.500px; }
.cards { display: flex; gap: 15.300px; height: 348.500px; padding: 5.500px 0 0 7.500px; overflow: hidden; }
.card { position: relative; width: 340.300px; height: 340px; flex: none; background: #ddd; color: #333; }
.green { display: flex; align-items: center; height: 24px; background: #92cc40; color: #fff; padding-left: 4.500px; }
.green svg { margin: 2px 0 0 4px; }
.act { position: absolute; left: 219.500px; }
.green .ic { position: absolute; left: 274.500px; margin: 2px 0 0 4px; }
.r1 { height: 17.500px; line-height: 18px; background: #d2d2d2; padding-left: 4.500px; border-top: .5px solid #e2e2e2; }
.r2 { height: 26.500px; line-height: 26.500px; text-align: center; padding-left: 12px; }
.r3 { height: 17px; line-height: 16px; border-bottom: 1px solid #eee; }
.ge { font-size: 12.100px; line-height: 17px; padding: 0 0 0 4.500px; color: #111; }
.cpu { font-size: 6.500px; line-height: 8px; margin-top: 2px; padding-left: 4.500px; }
.cx { position: absolute; right: -4px; top: -4px; }
.hs { height: 9.500px; background: #f1f1f1; padding: 2px 0 0 8.500px; }
.hs b { display: block; width: 609px; height: 6.500px; background: #c1c1c1; }
.mano footer { position: relative; margin-top: 3px; height: 25.500px; background: #e4e4e4; border-top: 1.500px solid #cfcfcf; font-size: 13px; line-height: 25px; padding-left: 411px; color: #666; }
.mano footer i { position: absolute; right: 12px; top: 9.500px; border: 4.500px solid transparent; border-bottom: 5px solid #aaa; border-top: 0; }

/* ONOS */
.onos, .flows { font-family: "Open Sans", sans-serif; background: #fff; }
.onos { width: 972px; height: 482px; }
.onos header, .flows header { display: flex; justify-content: space-between; height: 23px; background: #231f20; }
.ol { font: 600 19px "Open Sans", sans-serif; fill: url(#gOnos); }
.os { font: 6.800px "Open Sans", sans-serif; fill: #1a6496; }
.usr { display: flex; align-items: center; padding-right: 7.500px; font-size: 7.700px; color: #1c86c8; }
.usr span { font-size: 11px; color: #aaa; margin-right: 8px; }
.usr b { font-weight: 600; }
.usr i { border: 2.500px solid transparent; border-top: 3px solid #888; border-bottom: 0; margin-left: 7px; }
.stage { position: relative; }
.eg, .eh { stroke: #b4b4b4; stroke-width: .9; } .en { stroke: #86cda0; stroke-width: 1.200; } .eo { stroke: #ffa619; stroke-width: 1.700; }
.hip { font: 600 5.200px "Open Sans", sans-serif; fill: #8a5a78; text-anchor: middle; }
.ft { font: 5.200px "Open Sans", sans-serif; fill: #444; text-anchor: middle; }
.ct { font: 7.700px "Open Sans", sans-serif; fill: #555; }
aside { position: absolute; right: 10.500px; top: 9px; width: 148.500px; }
.pn { background: #fff; border: 1px solid #ddd; padding: 0 7.500px; }
.p1 { height: 134px; margin-bottom: 11px; } .p2 { height: 193.500px; }
.pn h4 { display: flex; align-items: center; gap: 4.500px; height: 29px; padding-top: 3px; margin-bottom: 0; font-size: 10.300px; font-weight: 300; color: #555; padding-left: 1.500px; }
.pn dl { display: grid; grid-template-columns: 83px 1fr; font-size: 6.600px; line-height: 10.300px; padding-left: 1.200px; color: #777; align-items: center; }
.p2 dl { grid-template-columns: 59.500px 1fr; }
.pn dt { font-weight: 700; color: #444; }
.pn .two { line-height: 9.300px; padding: .5px 0; }
.pn hr { height: 1.500px; margin: 3.200px 0 3.900px; border: 0; background: #cdcdc6; }
.pn .wide { margin: 3px -1.500px 4.500px; }
.di { display: flex; gap: 5.200px; padding-left: 2.500px; color: #5b9bd5; }

/* flows */
.flows { width: 971px; height: 404.500px; }
.flows header { height: 22px; }
.bar { display: flex; justify-content: space-between; height: 56px; border-top: 1px solid #999; }
.bar h2 { margin: 17.500px 0 0 11.500px; font-size: 12.150px; font-weight: 300; line-height: 20px; color: #555; }
.srch { display: flex; margin: 1.500px 0 0 8px; gap: 2px; font: 6.400px/9px "Liberation Sans", sans-serif; }
.si { width: 87.500px; height: 11px; border: 1px solid #b5b5b5; color: #888; padding-left: 1px; }
.sb { width: 48.500px; height: 11px; border: 1px solid #aaa; padding-left: 2px; color: #111; position: relative; }
.sb i { position: absolute; right: 3.500px; top: 3px; border: 1.700px solid transparent; border-top: 3px solid #111; border-bottom: 0; }
.vi { display: flex; align-items: center; height: 22px; margin: 14.500px 10px 0 0; color: #8f9193; gap: 3.500px; }
.sp { width: 1px; height: 22px; background: #ccc; margin: 0 4.500px 0 3px; }
.s2 { margin: 0 2px 0 4px; }
.fo { margin: -1px -.5px 0 -1px; }
table { table-layout: fixed; width: 956px; margin-left: 8px; border-collapse: collapse; font-size: 6.680px; color: #666; text-align: center; }
.c1 { width: 54px; } .c2 { width: 51px; } .c3 { width: 49px; } .c4 { width: 44px; } .c5 { width: 66px; } .c6 { width: 229px; } .c7 { width: 233px; } .c8 { width: 230px; }
th, td { padding: 0; overflow: visible; }
th { height: 27px; background: #e4e4e4; color: #333; font-size: 6.100px; font-weight: 700; letter-spacing: .32px; line-height: 9.500px; }
td { height: 13.450px; line-height: 13px; }
tbody tr { background: #fbfbfb; } tbody tr:nth-child(even) { background: #f4f4f4; }
.r { text-align: right; padding-right: 2.500px; }
</style>
